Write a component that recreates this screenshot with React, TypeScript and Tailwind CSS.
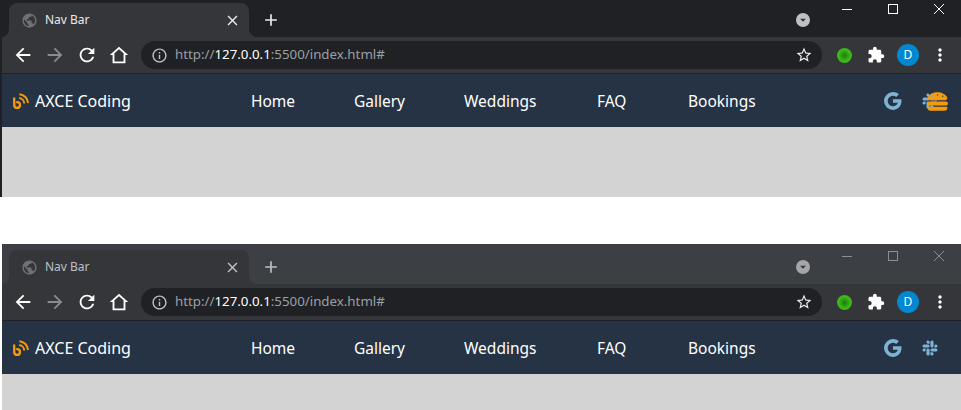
import { ReactNode } from "react";
import {
  MdArrowBack,
  MdArrowForward,
  MdRefresh,
  MdInfoOutline,
  MdStarBorder,
  MdExtension,
  MdMoreVert,
  MdPublic,
  MdClose,
  MdAdd,
  MdArrowDropDown,
} from "react-icons/md";
import { BiLogoGoogle, BiLogoSlack } from "react-icons/bi";
import { FaHamburger } from "react-icons/fa";

const links = [
  { label: "Home", width: "w-[103px]" },
  { label: "Gallery", width: "w-[110px]" },
  { label: "Weddings", width: "w-[133px]" },
  { label: "FAQ", width: "w-[91px]" },
  { label: "Bookings", width: "w-[66px]" },
];

const ToolButton = ({ children }: { children: ReactNode }) => (
  <div className="w-8 h-8 flex items-center justify-center">{children}</div>
);

const BlogLogo = () => (
  <svg viewBox="0 0 16 16" className="w-[16px] h-[16px] text-[#f59a0c]" fill="none" stroke="currentColor">
    <path d="M1.2 5.5v6.6a2.9 2.9 0 1 0 2.9-2.9" strokeWidth="2.3" strokeLinecap="round" />
    <path d="M6.2 5a5.6 5.6 0 0 1 5 5.6" strokeWidth="2" />
    <path d="M6.4 1.2a9.2 9.2 0 0 1 8.6 8.8" strokeWidth="2" />
  </svg>
);

const Window = ({ active }: { active: boolean }) => (
  <div className={active ? "border-l-2 border-[#202124]" : "ml-[2px]"}>
    {/* tab strip */}
    <div
      className={`flex pl-[7px] ${
        active ? "pt-[3px] bg-[#202124]" : "pt-[6px] bg-[#3c3f43]"
      }`}
    >
      <div className="relative w-[240px] h-[34px] rounded-t-lg bg-[#35363a] flex items-center pl-[12px] pr-[8px]">
        <svg viewBox="0 0 8 8" className="absolute -left-2 bottom-0 w-2 h-2 text-[#35363a]" fill="currentColor">
          <path d="M8 0v8H0a8 8 0 0 0 8-8z" />
        </svg>
        <svg viewBox="0 0 8 8" className="absolute -right-2 bottom-0 w-2 h-2 text-[#35363a]" fill="currentColor">
          <path d="M0 0v8h8a8 8 0 0 1-8-8z" />
        </svg>
        <MdPublic className="text-[#6e7175]" size={17} />
        <span
          className={`ml-[7px] flex-1 text-[12px] font-['Noto_Sans',sans-serif] ${
            active ? "text-[#e8eaed]" : "text-[#bdc1c6]"
          }`}
        >
          Nav Bar
        </span>
        <MdClose className={active ? "text-[#e8eaed]" : "text-[#bdc1c6]"} size={17} />
      </div>
      <div className="ml-2 w-7 h-[34px] flex items-center justify-center">
        <MdAdd className={active ? "text-[#e8eaed]" : "text-[#bdc1c6]"} size={20} />
      </div>
      <div className="flex-1 h-[34px] flex items-center justify-end pr-[14px]">
        <div
          className={`w-[14px] h-[14px] rounded-full flex items-center justify-center ${
            active ? "bg-[#bdc1c6]" : "bg-[#a3a5a8]"
          }`}
        >
          <MdArrowDropDown className="text-[#35363a]" size={20} />
        </div>
      </div>
      <div className={`flex ${active ? "text-white" : "text-[#8b8e92]"}`}>
        <div className="w-[46px] h-3 flex items-center justify-center">
          <div className="w-[10px] h-px bg-current" />
        </div>
        <div className="w-[46px] h-3 flex items-center justify-center">
          <div className="w-[10px] h-[10px] border border-current" />
        </div>
        <div className="w-[45px] h-3 flex items-center justify-center">
          <svg viewBox="0 0 10 10" className="w-[10px] h-[10px]" stroke="currentColor" strokeWidth="1">
            <path d="M0 0l10 10M10 0L0 10" />
          </svg>
        </div>
      </div>
    </div>

    {/* toolbar */}
    <div className="h-[37px] bg-[#35363a] border-b border-[#202124] flex items-center pl-[5px] pr-[5px] text-white">
      <ToolButton>
        <MdArrowBack size={22} />
      </ToolButton>
      <ToolButton>
        <MdArrowForward className="text-[#8a8b8e]" size={22} />
      </ToolButton>
      <ToolButton>
        <MdRefresh size={22} />
      </ToolButton>
      <ToolButton>
        <svg viewBox="0 0 24 24" className="w-[22px] h-[22px]" fill="currentColor" fillRule="evenodd">
          <path d="M12 3L2 12h3v9h14v-9h3L12 3zm0 2.7l5 4.5V19H7v-8.8l5-4.5z" />
        </svg>
      </ToolButton>
      <div className="ml-[6px] mr-[6px] flex-1 h-[28px] rounded-full bg-[#202124] flex items-center pl-[10px] pr-[9px]">
        <MdInfoOutline className="text-[#bdc1c6]" size={17} />
        <span className="ml-[7px] flex-1 text-[13.3px] text-[#9aa0a6] font-['Noto_Sans',sans-serif]">
          http://<span className="text-white">127.0.0.1</span>:5500/index.html#
        </span>
        <MdStarBorder className="text-[#e8eaed]" size={18} />
      </div>
      <ToolButton>
        <div className="w-[15px] h-[15px] rounded-full bg-[radial-gradient(circle_at_50%_50%,#1f7a10_0%,#2f9a14_28%,#3dbd18_58%,#2a9a0e_100%)]" />
      </ToolButton>
      <ToolButton>
        <MdExtension size={18} />
      </ToolButton>
      <ToolButton>
        <div className="w-[22px] h-[22px] rounded-full bg-[#0288d1] flex items-center justify-center text-[12px] font-['Noto_Sans',sans-serif]">
          D
        </div>
      </ToolButton>
      <ToolButton>
        <MdMoreVert size={20} />
      </ToolButton>
    </div>

    {/* nav bar */}
    <nav className="h-[53px] bg-[#253345] flex items-center pl-[11px] text-white font-['Noto_Sans',sans-serif]">
      <div className="w-[238px] flex items-center gap-[6px] text-[16px]">
        <BlogLogo />
        <span>AXCE Coding</span>
      </div>
      <ul className="flex mt-[2px] text-[15.5px] whitespace-nowrap">
        {links.map((link) => (
          <li key={link.label} className={link.width}>
            {link.label}
          </li>
        ))}
      </ul>
      <div className="ml-auto flex items-center text-[#7fb3d5]">
        <BiLogoGoogle size={24} />
        <div className="relative ml-[16px] mr-[22px] w-[18px] h-[18px]">
          <BiLogoSlack size={18} />
          {active && (
            <FaHamburger className="absolute left-[6px] -top-[1px] text-[#f59a0c]" size={21} />
          )}
        </div>
      </div>
    </nav>

    <div className={`bg-[#d3d3d3] ${active ? "h-[70px]" : "h-[36px]"}`} />
  </div>
);

export default function App() {
  return (
    <div className="w-[961px] h-[410px] overflow-hidden bg-white flex flex-col gap-[47px]">
      <Window active />
      <Window active={false} />
    </div>
  );
}
